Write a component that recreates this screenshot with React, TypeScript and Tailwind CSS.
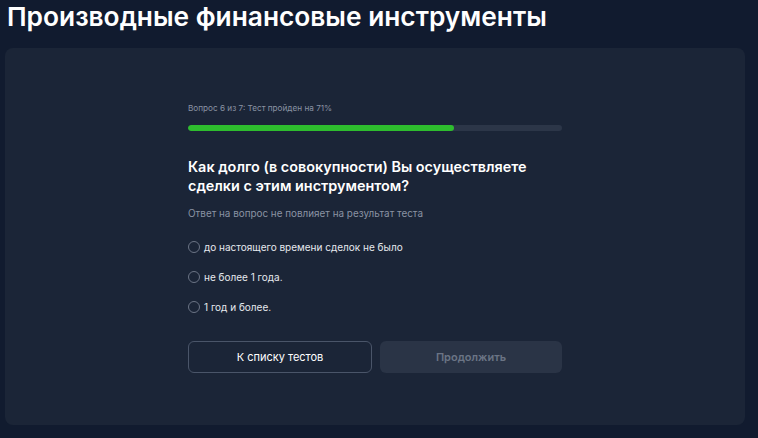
import React from "react";

const options = [
  "до настоящего времени сделок не было",
  "не более 1 года.",
  "1 год и более.",
];

export default function App() {
  return (
    <div
      className="w-[758px] h-[438px] bg-[#111b2f] overflow-hidden"
      style={{ fontFamily: "Inter, 'Noto Sans', sans-serif" }}
    >
      <h1 className="pl-[7px] pt-0 h-[48px] text-[26.3px] leading-[34px] font-semibold text-white">
        Производные финансовые инструменты
      </h1>
      <div className="ml-[5px] w-[740px] h-[377px] rounded-lg bg-[#1b2537] flex justify-center">
        <div className="w-[374px] pt-[54px] flex flex-col">
          <div className="text-[8.2px] leading-[12px] text-[#8a93a3]">
            Вопрос 6 из 7: Тест пройден на 71%
          </div>
          <div className="mt-[11px] h-[6px] rounded-full bg-[#2c3648] overflow-hidden">
            <div className="h-full rounded-full bg-[#2ebd2e]" style={{ width: "71%" }} />
          </div>
          <div className="mt-[26px] text-[14.4px] leading-[19px] font-semibold text-white">
            Как долго (в совокупности) Вы осуществляете сделки с этим инструментом?
          </div>
          <div className="mt-[11px] text-[9.9px] leading-[14px] text-[#8a93a3]">
            Ответ на вопрос не повлияет на результат теста
          </div>
          <div className="mt-[20px] flex flex-col gap-[16px]">
            {options.map((o) => (
              <label key={o} className="flex items-center gap-[4px] h-[14px] text-[10px] text-[#e6e9ee]">
                <span className="w-[12px] h-[12px] rounded-full border border-[#6b7485]" />
                {o}
              </label>
            ))}
          </div>
          <div className="mt-[27px] flex gap-[8px]">
            <button className="flex-1 h-[32px] rounded-md border border-[#4a5569] text-white text-[11px]">
              К списку тестов
            </button>
            <button className="flex-1 h-[32px] rounded-md bg-[#2a3446] text-[#6b7485] text-[11px] font-semibold">
              Продолжить
            </button>
          </div>
        </div>
      </div>
    </div>
  );
}
